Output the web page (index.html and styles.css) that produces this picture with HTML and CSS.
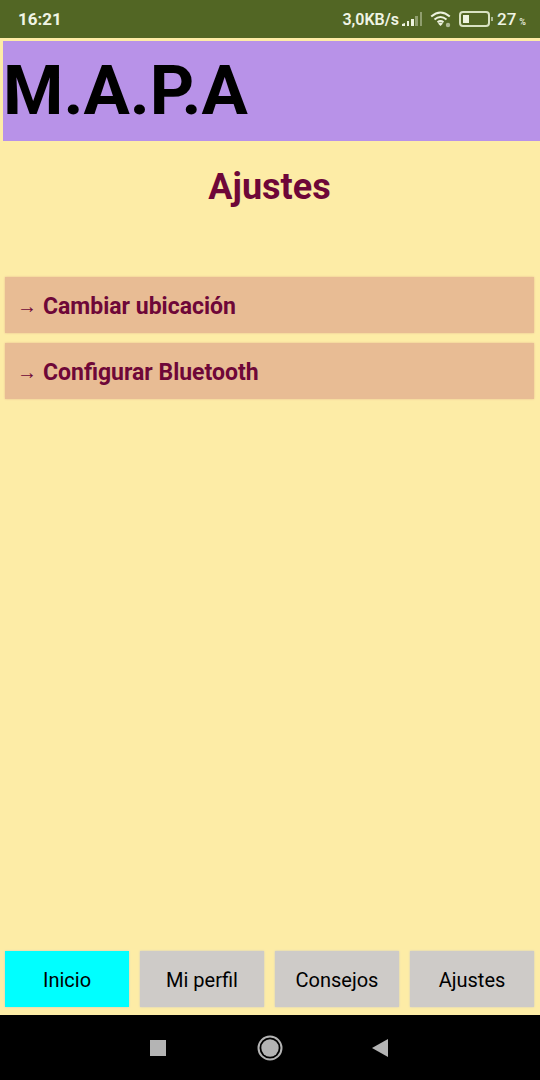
FILE: index.html
```html
<!DOCTYPE html>
<html lang="es">
<head>
<meta charset="utf-8">
<meta name="viewport" content="width=device-width, initial-scale=1">
<title>M.A.P.A</title>
<link rel="stylesheet" href="styles.css">
</head>
<body>
<div class="screen">
  <div class="status-bar">
    <span class="clock">16:21</span>
    <div class="status-info">
      <span class="speed">3,0KB/s</span>
      <svg class="signal" width="21" height="16" viewBox="0 0 21 16" aria-hidden="true">
        <path d="M0 15v-2l3-1v3zM5 10h2v5H5zM9 8h3v7H9z"/>
        <path class="faint" d="M13 5h3v10h-3zM18 1h2v14h-2z"/>
      </svg>
      <svg class="wifi" width="22" height="18" viewBox="0 0 22 18" aria-hidden="true">
        <path class="arc" d="M1.200 6.500Q10.500-1.500 19.800 6.500M4.500 9.500Q10.500 4.500 16.500 9.500M7.500 12.300Q10.500 10 13.500 12.300"/>
        <path d="M8 13.500Q10.500 12 13 13.500L10.500 16z"/>
        <circle class="dim" cx="18" cy="15" r="2.200"/>
      </svg>
      <svg class="battery" width="35" height="18" viewBox="0 0 35 18" aria-hidden="true">
        <rect class="case" x="1" y="2" width="29" height="14" rx="3"/>
        <rect x="4" y="5" width="6" height="8"/>
        <rect class="dim" x="32" y="7" width="2" height="4"/>
      </svg>
      <span class="level">27</span>
      <span class="percent">%</span>
    </div>
  </div>
  <header class="brand"><h1>M.A.P.A</h1></header>
  <main class="settings">
    <h2>Ajustes</h2>
    <div class="options">
      <button class="option" type="button"><span class="arrow">→</span>Cambiar ubicación</button>
      <button class="option" type="button"><span class="arrow">→</span>Configurar Bluetooth</button>
    </div>
  </main>
  <nav class="tabs">
    <button class="tab active" type="button">Inicio</button>
    <button class="tab" type="button">Mi perfil</button>
    <button class="tab" type="button">Consejos</button>
    <button class="tab" type="button">Ajustes</button>
  </nav>
  <div class="system-nav">
    <button type="button" aria-label="Recientes"><svg width="26" height="26" viewBox="0 0 26 26"><path d="M4 5h16v16H4z"/></svg></button>
    <button type="button" aria-label="Inicio del sistema"><svg width="26" height="26" viewBox="0 0 26 26"><circle class="ring" cx="13" cy="13" r="11.500"/><circle cx="13" cy="13" r="8.700"/></svg></button>
    <button type="button" aria-label="Atrás"><svg width="26" height="26" viewBox="0 0 26 26"><path d="M20 4v18L4 13z"/></svg></button>
  </div>
</div>
</body>
</html>
```
FILE: styles.css
```css
* {
  box-sizing: border-box;
}

body {
  margin: 0;
  background: #fdeca6;
  font-family: Roboto, "Liberation Sans", sans-serif;
}

h1,
h2 {
  margin: 0;
}

svg {
  display: block;
}

button {
  margin: 0;
  border: 0;
  font-family: inherit;
  cursor: pointer;
}

.screen {
  display: flex;
  flex-direction: column;
  min-height: 100vh;
}

.status-bar {
  display: flex;
  align-items: center;
  justify-content: space-between;
  height: 38px;
  padding: 0 14px 0 18px;
  background: #526624;
  color: #f0f4e4;
  fill: #edf2df;
  font-size: 17px;
  font-weight: 500;
}

.clock {
  font-weight: 700;
}

.status-info {
  display: flex;
  align-items: center;
}

.speed {
  font-size: 16px;
  font-weight: 600;
}

.signal {
  margin: 0 7px 0 3px;
}

.wifi {
  margin-right: 7px;
}

.battery {
  margin-right: 3px;
}

.percent {
  margin: 5px 0 0 3px;
  font-size: 9px;
}

.faint {
  opacity: 0.4;
}

.dim {
  opacity: 0.6;
}

.arc {
  fill: none;
  stroke: #edf2df;
  stroke-width: 2;
}

.case {
  fill: none;
  stroke: #d9e2c3;
  stroke-width: 2;
}

.brand {
  margin: 3px 0 0 3px;
  height: 100px;
  background: #b892e8;
  color: #000;
}

.brand h1 {
  font-size: 69px;
  font-weight: 700;
  line-height: 100px;
}

.settings {
  flex: 1;
  padding: 24px 6px 24px 5px;
  color: #6e0738;
}

.settings h2 {
  font-size: 36px;
  line-height: 44px;
  text-align: center;
}

.options {
  display: flex;
  flex-direction: column;
  gap: 10px;
  margin-top: 68px;
}

.option {
  display: flex;
  align-items: center;
  height: 56px;
  padding: 2px 12px 0;
  background: #e8bc94;
  box-shadow: 0 0 2px #e8bc94;
  color: #6e0738;
  font-size: 23px;
  font-weight: 700;
}

.arrow {
  width: 26px;
  font-family: "Liberation Sans", sans-serif;
  font-size: 20px;
  font-weight: 700;
  text-align: left;
}

.tabs {
  display: grid;
  grid-template-columns: repeat(4, 1fr);
  gap: 11px;
  padding: 0 6px 8px 5px;
}

.tab {
  height: 56px;
  padding: 2px 0 0;
  background: #cecbc8;
  box-shadow: 0 0 2px #cecbc8;
  color: #000;
  font-size: 20px;
}

.tab.active {
  background: #0ff;
}

.system-nav {
  display: flex;
  align-items: center;
  justify-content: center;
  gap: 85px;
  height: 65px;
  background: #000;
  fill: #b4b4b4;
}

.system-nav button {
  padding: 0;
  background: none;
  fill: inherit;
}

.ring {
  fill: none;
  stroke: #b4b4b4;
  stroke-width: 2;
}
```
